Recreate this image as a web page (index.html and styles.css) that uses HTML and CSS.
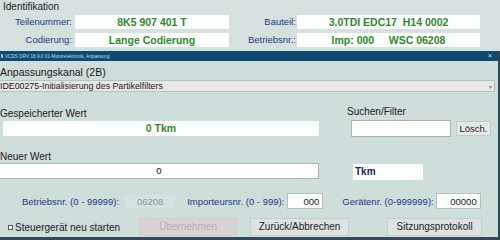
FILE: index.html
```html
<!DOCTYPE html>
<html lang="de">
<head>
<meta charset="utf-8">
<title>VCDS Anpassung</title>
<link rel="stylesheet" href="styles.css">
</head>
<body>
<section class="ident">
  <div class="ident-title">Identifikation</div>
  <div class="ident-grid">
    <div class="lbl">Teilenummer:</div>
    <div class="val">8K5 907 401 T</div>
    <div class="lbl">Bauteil:</div>
    <div class="val">3.0TDI EDC17&nbsp; H14 0002</div>
    <div class="lbl">Codierung:</div>
    <div class="val">Lange Codierung</div>
    <div class="lbl">Betriebsnr.:</div>
    <div class="val">Imp: 000&nbsp;&nbsp;&nbsp;&nbsp; WSC 06208</div>
  </div>
</section>
<section class="window">
  <div class="titlebar">
    <span class="tb-icon"></span>
    <span class="tb-text">VCDS DRV 18.9.0 01-Motorelektronik, Anpassung</span>
    <span class="tb-close">×</span>
  </div>
  <div class="content">
    <div class="sec-label">Anpassungskanal (2B)</div>
    <div class="dropdown">
      <span>IDE00275-Initialisierung des Partikelfilters</span>
      <span class="dd-arrow">▾</span>
    </div>

    <div class="row-stored">
      <div class="col-left">
        <div class="sec-label2">Gespeicherter Wert</div>
        <div class="stored-field">0 Tkm</div>
      </div>
      <div class="col-search">
        <div class="search-label">Suchen/Filter</div>
        <div class="search-row">
          <div class="search-input"></div>
          <div class="btn-small">Lösch.</div>
        </div>
      </div>
    </div>

    <div class="row-new">
      <div class="col-left">
        <div class="sec-label2">Neuer Wert</div>
        <div class="new-field">0</div>
      </div>
      <div class="unit-field">Tkm</div>
    </div>

    <div class="row-nums">
      <span class="nlbl n1">Betriebsnr. (0 - 99999):</span>
      <span class="nval-dis">06208</span>
      <span class="nlbl n2">Importeursnr. (0 - 999):</span>
      <span class="ninput w-imp">000</span>
      <span class="nlbl n3">Gerätenr. (0-999999):</span>
      <span class="ninput w-ger">00000</span>
    </div>

    <div class="row-buttons">
      <span class="chk"></span>
      <span class="chk-label">Steuergerät neu starten</span>
      <span class="btn btn-dis">Übernehmen</span>
      <span class="btn btn-back">Zurück/Abbrechen</span>
      <span class="btn btn-log">Sitzungsprotokoll</span>
    </div>
  </div>
</section>
</body>
</html>
```

FILE: styles.css
```css
html, body {
  margin: 0;
  padding: 0;
}
body {
  width: 500px;
  height: 240px;
  overflow: hidden;
  font-family: "Liberation Sans", Arial, sans-serif;
  background: #d4e1df;
  color: #1c1c1c;
}

/* Identification block */
.ident {
  height: 51px;
  box-sizing: border-box;
  padding-top: 1px;
}
.ident-title {
  font-size: 10px;
  line-height: 11px;
  padding-left: 3px;
  color: #1e1e1e;
}
.ident-grid {
  display: grid;
  grid-template-columns: 75px 154px 68px 183px;
  grid-auto-rows: 14px;
  row-gap: 4px;
  margin-top: 3px;
}
.lbl {
  font-size: 9.5px;
  line-height: 14px;
  color: #24398a;
  text-align: right;
  padding-right: 3px;
}
.lbl:nth-child(3), .lbl:nth-child(7) { padding-right: 1px; }
.val {
  background: #fdfffd;
  font-size: 10.5px;
  font-weight: bold;
  line-height: 14px;
  color: #2f8a2a;
  text-align: center;
  white-space: nowrap;
}

/* Window */
.window {
  height: 189px;
  box-sizing: border-box;
  background: #cddedb;
  border-right: 2px solid #2e4656;
  border-bottom: 3px solid #34495a;
}
.titlebar {
  height: 10px;
  background: #0e4a6f;
  display: flex;
  align-items: center;
  color: #c9dbe6;
}
.tb-icon {
  width: 2px;
  height: 4px;
  background: #8fc0e0;
  margin-left: 1px;
}
.tb-text {
  font-size: 4.6px;
  margin-left: 2px;
  white-space: nowrap;
  letter-spacing: 0.05px;
}
.tb-close {
  margin-left: auto;
  margin-right: 6px;
  font-size: 7px;
  line-height: 10px;
  color: #cfe0ea;
}

.content {
  padding-top: 5px;
}
.sec-label {
  font-size: 10.5px;
  line-height: 13px;
  color: #1a1a1a;
}
.dropdown {
  width: 495px;
  height: 12px;
  margin-top: 1px;
  box-sizing: border-box;
  background: #e6e9e8;
  border: 1px solid #b9c2c0;
  border-left: none;
  display: flex;
  align-items: center;
  font-size: 8.8px;
  color: #1a1a1a;
}
.dd-arrow {
  margin-left: auto;
  margin-right: 2px;
  font-size: 6px;
  color: #888;
}

.row-stored {
  display: flex;
  margin-top: 15px;
}
.col-left {
  width: 319px;
}
.sec-label2 {
  font-size: 10px;
  line-height: 13px;
  color: #1a1a1a;
}
.stored-field {
  margin-left: 3px;
  height: 15px;
  background: #fdfffd;
  font-size: 10.5px;
  font-weight: bold;
  line-height: 15px;
  color: #2f8a2a;
  text-align: center;
  margin-top: 1px;
}
.col-search {
  margin-left: 28px;
  margin-top: -2px;
}
.search-label {
  font-size: 10px;
  line-height: 13px;
}
.search-row {
  display: flex;
  align-items: flex-start;
  margin-top: 2px;
}
.search-input {
  margin-left: 4px;
  width: 100px;
  height: 17px;
  box-sizing: border-box;
  background: #fdfffd;
  border: 1px solid #aab5b3;
}
.btn-small {
  margin-left: 5px;
  margin-top: 1px;
  width: 35px;
  height: 15px;
  box-sizing: border-box;
  background: #e4e7e6;
  border: 1px solid #c3cac9;
  font-size: 9.5px;
  line-height: 13px;
  text-align: center;
}

.row-new {
  display: flex;
  margin-top: 13px;
  align-items: flex-end;
}
.new-field {
  height: 16px;
  box-sizing: border-box;
  background: #fdfffd;
  border-top: 1px solid #a9b3b1;
  border-bottom: 1px solid #a9b3b1;
  border-right: 1px solid #a9b3b1;
  font-size: 9.5px;
  line-height: 14px;
  text-align: center;
  color: #222;
}
.unit-field {
  margin-left: 34px;
  margin-bottom: -1px;
  width: 70px;
  height: 16px;
  background: #fdfffd;
  font-size: 10px;
  font-weight: bold;
  line-height: 16px;
  color: #1d2466;
  padding-left: 2px;
  box-sizing: border-box;
}

.row-nums {
  display: flex;
  align-items: center;
  height: 14px;
  margin-top: 15px;
  font-size: 9.5px;
}
.nlbl {
  color: #24398a;
  white-space: nowrap;
}
.n1 { margin-left: 22px; }
.nval-dis {
  margin-left: 6px;
  width: 50px;
  height: 13px;
  line-height: 13px;
  background: #d3e3e0;
  color: #8d9796;
  text-align: center;
}
.n2 { margin-left: 12px; }
.ninput {
  height: 16px;
  line-height: 15px;
  box-sizing: border-box;
  background: #fdfffd;
  border: 1px solid #b7c0be;
  text-align: right;
  padding-right: 3px;
  color: #1a1a1a;
}
.w-imp { width: 36px; margin-left: 3px; }
.n3 { margin-left: 19px; }
.w-ger { width: 45px; margin-left: 2px; }

.row-buttons {
  display: flex;
  align-items: center;
  height: 18px;
  margin-top: 10px;
  font-size: 10px;
}
.chk {
  width: 3px;
  height: 3px;
  border: 1px solid #555;
  background: #fff;
  margin-left: 8px;
}
.chk-label {
  margin-left: 2px;
  white-space: nowrap;
}
.btn {
  height: 18px;
  box-sizing: border-box;
  line-height: 16px;
  text-align: center;
  background: #dde3e2;
  border: 1px solid #c6cfcd;
  white-space: nowrap;
}
.btn-dis {
  margin-left: 19px;
  width: 98px;
  background: #d9d4d4;
  color: #b5aeae;
  border-color: #d2cccc;
}
.btn-back {
  margin-left: 13px;
  width: 99px;
}
.btn-log {
  margin-left: 38px;
  width: 95px;
}
```
